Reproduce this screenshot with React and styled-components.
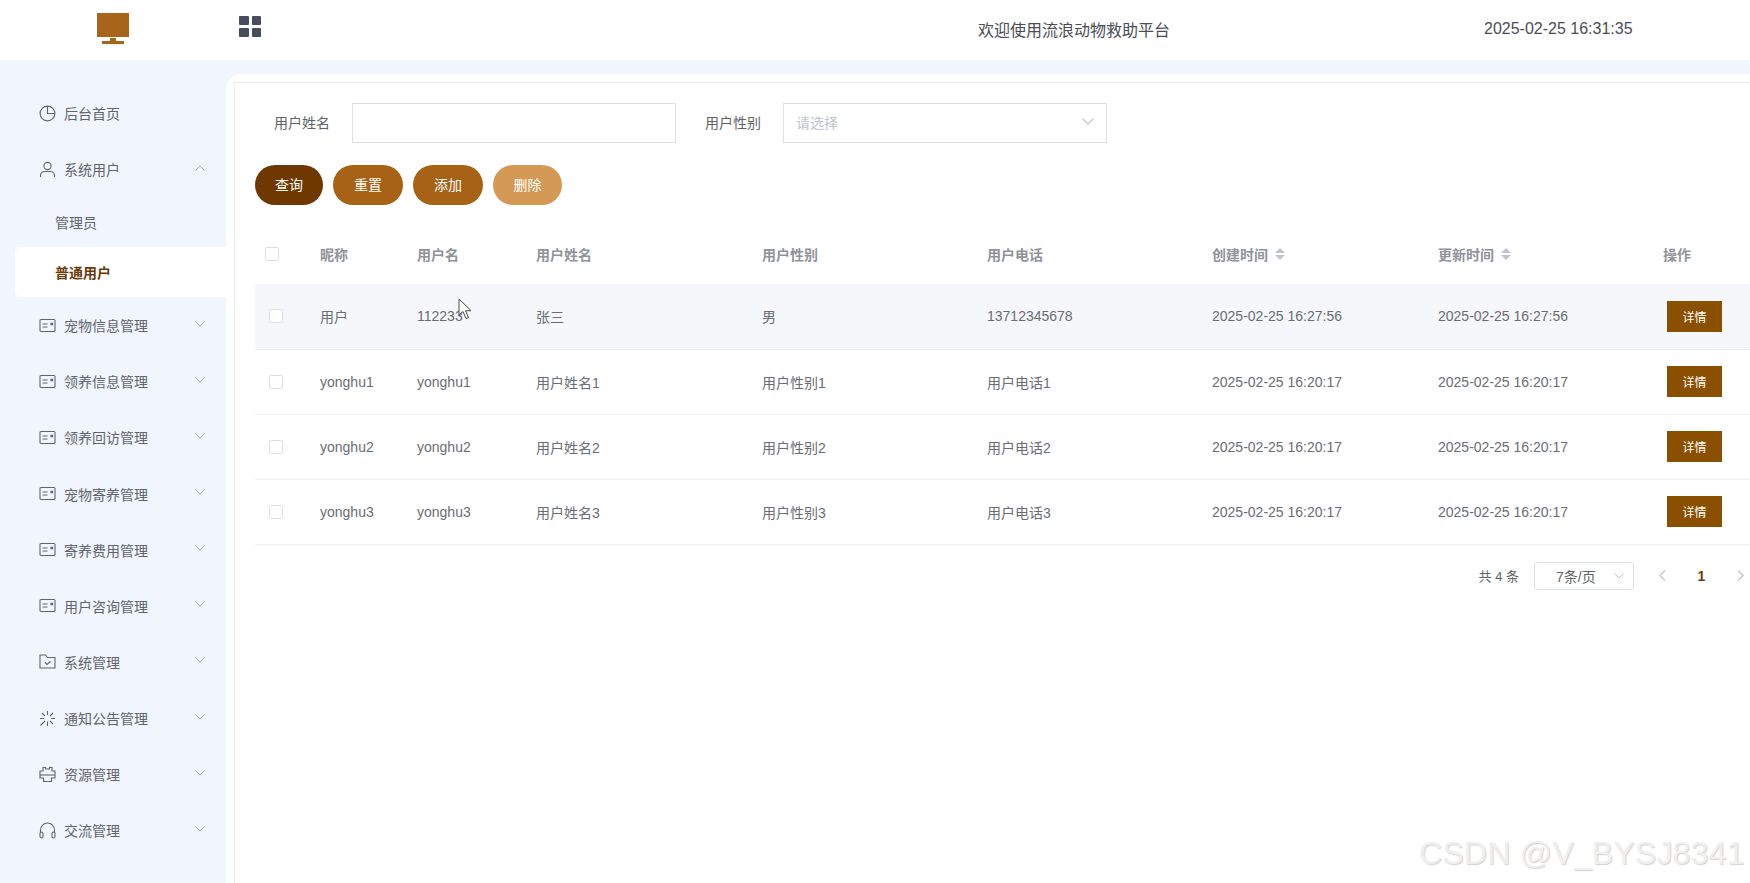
import styled, { createGlobalStyle } from 'styled-components'

const Global = createGlobalStyle`
  html, body {
    margin: 0;
    padding: 0;
    height: 100%;
    overflow: hidden;
    background: #f1f5fd;
    font-family: "Liberation Sans", "Noto Sans CJK SC", sans-serif;
    font-size: 14px;
    color: #606266;
  }
  * { box-sizing: border-box; }
`

const Page = styled.div`
  position: relative;
  width: 1750px;
  height: 883px;
  overflow: hidden;
  display: flex;
  flex-direction: column;
`

const TopBar = styled.header`
  height: 60px;
  flex: none;
  padding-bottom: 2px;
  background: #fff;
  display: flex;
  align-items: center;
`

const LogoBox = styled.div`
  width: 226px;
  display: flex;
  justify-content: center;
`

const GridBtn = styled.div`
  width: 22px;
  height: 21px;
  margin: -5px 0 0 13px;
  display: grid;
  grid-template-columns: 1fr 1fr;
  gap: 3px;
`

const GridDot = styled.span`
  background: #484d5e;
  border-radius: 1px;
`

const Welcome = styled.div`
  margin-left: 717px;
  width: 356px;
  font-size: 16px;
  color: #4a4d55;
`

const Clock = styled.div`
  margin-left: 150px;
  font-size: 16px;
  color: #4a4d55;
`

const Body = styled.div`
  flex: 1;
  display: flex;
  min-height: 0;
`

const Sidebar = styled.aside`
  width: 226px;
  flex: none;
  padding-top: 25px;
  background: #f1f5fd;
`

const MenuRow = styled.div`
  height: 56.12px;
  display: flex;
  align-items: center;
  padding-left: 39px;
  color: #5f6470;
`

const MenuIcon = styled.svg`
  width: 17px;
  height: 17px;
  flex: none;
  fill: none;
  stroke: #5f6470;
  stroke-width: 1.1;
`

const MenuText = styled.span`
  margin-left: 8px;
  flex: 1;
`

const Caret = styled.svg`
  width: 10px;
  height: 6px;
  margin: -3px 21px 0 0;
  fill: none;
  stroke: #a9aeb8;
  stroke-width: 1;
  transform: ${(p) => (p.$up ? 'rotate(180deg)' : 'none')};
`

const FieldCaret = styled.svg`
  width: ${(p) => p.$w}px;
  height: ${(p) => p.$w * 0.6}px;
  fill: none;
  stroke: #c0c4cc;
  stroke-width: 1;
`

const SubRow = styled.div`
  height: 50px;
  margin-left: 15px;
  padding-left: 40px;
  display: flex;
  align-items: center;
  border-radius: 6px 0 0 6px;
  background: ${(p) => (p.$active ? '#fff' : 'transparent')};
  color: ${(p) => (p.$active ? '#6d3a0a' : '#5f6470')};
  font-weight: ${(p) => (p.$active ? 700 : 400)};
`

const Main = styled.main`
  flex: 1;
  min-width: 0;
  margin-top: 14px;
  padding: 8px 0 0 8px;
  background: #fff;
  border-radius: 16px 0 0 0;
  overflow: hidden;
`

const Card = styled.section`
  width: 1560px;
  height: 100%;
  padding: 20px 0 0 20px;
  border: 1px solid #ececec;
  border-width: 1px 0 0 1px;
`

const SearchRow = styled.div`
  display: flex;
  gap: 10px;
`

const FormItem = styled.div`
  display: flex;
  align-items: center;
  gap: 22px;
`

const FormLabel = styled.label`
  width: 75px;
  padding-bottom: 3px;
  text-align: right;
`

const Field = styled.div`
  width: 324px;
  height: 40px;
  padding: 0 12px 2px;
  border: 1px solid #dcdfe6;
  display: flex;
  align-items: center;
  justify-content: space-between;
  color: #c0c4cc;
`

const ButtonRow = styled.div`
  display: flex;
  gap: 10px;
  margin: 22px 0 21px;
`

const PillButton = styled.button`
  width: ${(p) => p.$w}px;
  height: 40px;
  padding: 0 0 2px;
  border: 0;
  border-radius: 20px;
  background: ${(p) => p.$bg};
  color: #fff;
  font: inherit;
`

const Table = styled.table`
  width: 1530px;
  table-layout: fixed;
  border-collapse: collapse;
`

const HeadCell = styled.th`
  height: 58px;
  padding: 0 0 2px;
  text-align: left;
  font-weight: 700;
  color: #909399;
`

const HeadInner = styled.span`
  display: inline-flex;
  align-items: center;
  gap: 7px;
`

const Row = styled.tr`
  height: 65px;
  background: ${(p) => (p.$hover ? '#f5f7fa' : '#fff')};
  border-bottom: 1px solid #ebeef5;
`

const Cell = styled.td`
  padding: 0;
  color: #6a6d73;
`

const Check = styled.span`
  display: block;
  width: 14px;
  height: 14px;
  margin-left: ${(p) => p.$left}px;
  border: 1px solid #dcdfe6;
  border-radius: 2px;
  background: #fff;
`

const SortMark = styled.span`
  display: inline-flex;
  flex-direction: column;
  gap: 2px;
`

const Tri = styled.i`
  width: 0;
  height: 0;
  border-left: 5px solid transparent;
  border-right: 5px solid transparent;
  border-${(p) => (p.$up ? 'bottom' : 'top')}: 5px solid #c0c4cc;
`

const DetailButton = styled.button`
  display: block;
  width: 55px;
  height: 31px;
  margin-left: 4px;
  padding: 0;
  border: 0;
  background: #8b4f00;
  color: #fff;
  font: inherit;
  font-size: 12px;
`

const Pager = styled.div`
  width: 1530px;
  height: 28px;
  margin-top: 17px;
  padding-right: 41px;
  display: flex;
  align-items: center;
  justify-content: flex-end;
  font-size: 13px;
`

const PageSize = styled.div`
  width: 100px;
  height: 28px;
  margin: 0 17px 0 15px;
  padding: 0 9px 0 21px;
  border: 1px solid #dcdfe6;
  border-radius: 3px;
  display: flex;
  align-items: center;
  justify-content: space-between;
  font-size: 14px;
`

const PageArrow = styled.svg`
  width: 7px;
  height: 11px;
  margin-left: ${(p) => p.$left || 0}px;
  fill: none;
  stroke: #c0c4cc;
  stroke-width: 1.2;
`

const PageNum = styled.span`
  width: 71px;
  text-align: center;
  font-size: 14px;
  font-weight: 700;
  color: #6d3a0a;
`

const Watermark = styled.div`
  position: absolute;
  left: 1419px;
  top: 835px;
  font-size: 32px;
  letter-spacing: 0.2px;
  color: #efefef;
  text-shadow: 1px 1px 1px #d2d2d2;
  white-space: nowrap;
`

const Cursor = styled.svg`
  position: absolute;
  left: 458px;
  top: 298px;
  width: 14px;
  height: 22px;
`

const PieIcon = () => (
  <MenuIcon viewBox="0 0 17 17">
    <circle cx="8.5" cy="8.5" r="7.4" />
    <path d="M8.5 1.1v7.4h7.4" />
  </MenuIcon>
)

const UserIcon = () => (
  <MenuIcon viewBox="0 0 17 17">
    <circle cx="8.5" cy="5" r="3.6" />
    <path d="M1.5 16v-1.5a4 4 0 0 1 4-4h6a4 4 0 0 1 4 4V16" />
  </MenuIcon>
)

const CardIcon = () => (
  <MenuIcon viewBox="0 0 17 17">
    <rect x="1" y="2.5" width="15" height="12" rx="1" />
    <path d="M3.5 7h5M3.5 10h5" />
    <path d="M12 6.2h1.6v1.4H12z" fill="#5f6470" />
  </MenuIcon>
)

const FolderIcon = () => (
  <MenuIcon viewBox="0 0 17 17">
    <path d="M1 2h5.5l2 2.5H16V15H1z" />
    <path d="M6 9.5l2 2 3.5-3" />
  </MenuIcon>
)

const SparkIcon = () => (
  <MenuIcon viewBox="0 0 17 17">
    <path d="M8.5 1v4M8.5 11.5V16M1 8.5h4M12 8.5h4M3 3l3 3M11 6l3-3M1.5 15.5L6 11M11 11l3 3" />
  </MenuIcon>
)

const BoxIcon = () => (
  <MenuIcon viewBox="0 0 17 17">
    <path d="M4 5V1.5h2.5v1.5h4V1.5H13V5h3v7h-3.5v3.5h-8V12H1V5z" />
    <path d="M1 9h15" />
  </MenuIcon>
)

const HeadsetIcon = () => (
  <MenuIcon viewBox="0 0 17 17">
    <path d="M1.5 11V8a7 7 0 0 1 14 0v3" />
    <rect x="1" y="10" width="3" height="6" rx="1.5" />
    <rect x="13" y="10" width="3" height="6" rx="1.5" />
  </MenuIcon>
)

const Chevron = ({ up }) => (
  <Caret viewBox="0 0 10 6" $up={up}>
    <path d="M0.5 0.5L5 5l4.5-4.5" />
  </Caret>
)

const menus = [
  { text: '宠物信息管理', icon: CardIcon },
  { text: '领养信息管理', icon: CardIcon },
  { text: '领养回访管理', icon: CardIcon },
  { text: '宠物寄养管理', icon: CardIcon },
  { text: '寄养费用管理', icon: CardIcon },
  { text: '用户咨询管理', icon: CardIcon },
  { text: '系统管理', icon: FolderIcon },
  { text: '通知公告管理', icon: SparkIcon },
  { text: '资源管理', icon: BoxIcon },
  { text: '交流管理', icon: HeadsetIcon },
]

const rows = [
  ['用户', '112233', '张三', '男', '13712345678', '2025-02-25 16:27:56'],
  ['yonghu1', 'yonghu1', '用户姓名1', '用户性别1', '用户电话1', '2025-02-25 16:20:17'],
  ['yonghu2', 'yonghu2', '用户姓名2', '用户性别2', '用户电话2', '2025-02-25 16:20:17'],
  ['yonghu3', 'yonghu3', '用户姓名3', '用户性别3', '用户电话3', '2025-02-25 16:20:17'],
]

const colWidths = [65, 97, 119, 226, 225, 225, 226, 225, 122]

function Sort() {
  return (
    <SortMark>
      <Tri $up />
      <Tri />
    </SortMark>
  )
}

function App() {
  return (
    <Page>
      <Global />
      <TopBar>
        <LogoBox>
          <svg width="32" height="32" viewBox="0 0 32 32">
            <path d="M0 0h32v24H0z" fill="#a8641a" />
            <path d="M13 25h6v3h-6zM5 28h22v3H5z" fill="#a8641a" />
          </svg>
        </LogoBox>
        <GridBtn>
          <GridDot />
          <GridDot />
          <GridDot />
          <GridDot />
        </GridBtn>
        <Welcome>欢迎使用流浪动物救助平台</Welcome>
        <Clock>2025-02-25 16:31:35</Clock>
      </TopBar>
      <Body>
        <Sidebar>
          <MenuRow>
            <PieIcon />
            <MenuText>后台首页</MenuText>
          </MenuRow>
          <MenuRow>
            <UserIcon />
            <MenuText>系统用户</MenuText>
            <Chevron up />
          </MenuRow>
          <SubRow>管理员</SubRow>
          <SubRow $active>普通用户</SubRow>
          {menus.map((m) => (
            <MenuRow key={m.text}>
              <m.icon />
              <MenuText>{m.text}</MenuText>
              <Chevron />
            </MenuRow>
          ))}
        </Sidebar>
        <Main>
          <Card>
            <SearchRow>
              <FormItem>
                <FormLabel>用户姓名</FormLabel>
                <Field />
              </FormItem>
              <FormItem>
                <FormLabel>用户性别</FormLabel>
                <Field>
                  请选择
                  <FieldCaret viewBox="0 0 10 6" $w={12}>
                    <path d="M0.5 0.5L5 5l4.5-4.5" />
                  </FieldCaret>
                </Field>
              </FormItem>
            </SearchRow>
            <ButtonRow>
              <PillButton $w={68} $bg="#6f3800">查询</PillButton>
              <PillButton $w={70} $bg="#a86216">重置</PillButton>
              <PillButton $w={70} $bg="#a86216">添加</PillButton>
              <PillButton $w={69} $bg="#d49a55">删除</PillButton>
            </ButtonRow>
            <Table>
              <colgroup>
                {colWidths.map((w, i) => (
                  <col key={i} width={w} />
                ))}
              </colgroup>
              <thead>
                <tr>
                  <HeadCell><Check $left={10} /></HeadCell>
                  <HeadCell>昵称</HeadCell>
                  <HeadCell>用户名</HeadCell>
                  <HeadCell>用户姓名</HeadCell>
                  <HeadCell>用户性别</HeadCell>
                  <HeadCell>用户电话</HeadCell>
                  <HeadCell><HeadInner>创建时间<Sort /></HeadInner></HeadCell>
                  <HeadCell><HeadInner>更新时间<Sort /></HeadInner></HeadCell>
                  <HeadCell>操作</HeadCell>
                </tr>
              </thead>
              <tbody>
                {rows.map((r, i) => (
                  <Row key={i} $hover={i === 0}>
                    <Cell><Check $left={14} /></Cell>
                    {r.map((v, j) => (
                      <Cell key={j}>{v}</Cell>
                    ))}
                    <Cell>{r[5]}</Cell>
                    <Cell><DetailButton>详情</DetailButton></Cell>
                  </Row>
                ))}
              </tbody>
            </Table>
            <Pager>
              <span>共 4 条</span>
              <PageSize>
                7条/页
                <FieldCaret viewBox="0 0 10 6" $w={10}>
                  <path d="M0.5 0.5L5 5l4.5-4.5" />
                </FieldCaret>
              </PageSize>
              <PageArrow viewBox="0 0 7 11" $left={8}>
                <path d="M6 0.5L1 5.5l5 5" />
              </PageArrow>
              <PageNum>1</PageNum>
              <PageArrow viewBox="0 0 7 11">
                <path d="M1 0.5l5 5-5 5" />
              </PageArrow>
            </Pager>
          </Card>
        </Main>
      </Body>
      <Cursor viewBox="0 0 14 22">
        <path d="M1 1v16l4-3.5 3 7 2.5-1-3-6.8H13z" fill="#fff" stroke="#4a4a4a" strokeWidth="1" />
      </Cursor>
      <Watermark>CSDN @V_BYSJ8341</Watermark>
    </Page>
  )
}

export default App
